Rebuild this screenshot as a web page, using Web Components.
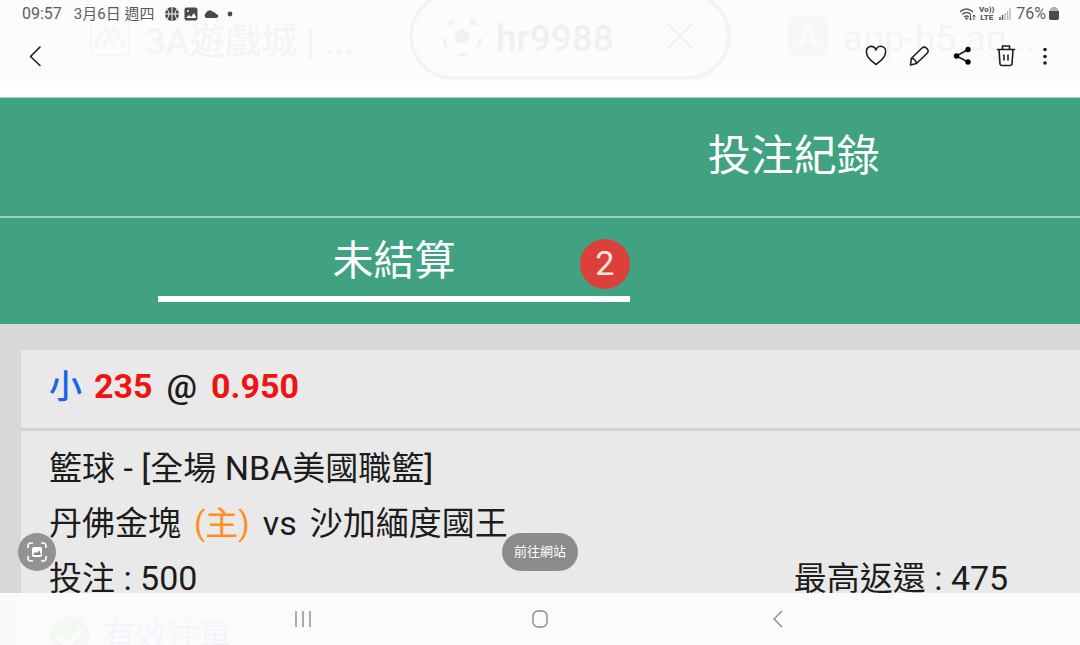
<!DOCTYPE html>
<html lang="zh-Hant">
<head>
<meta charset="utf-8">
<meta name="viewport" content="width=device-width, initial-scale=1">
<title>投注紀錄</title>
<style>
  html, body { margin: 0; height: 100%; }
  body { font-family: Roboto, "Noto Sans CJK TC", sans-serif; color: #1c1c1c; background: #fff; }
</style>
</head>
<body>
<photo-viewer>
  <bet-page slot="photo">
    <browser-tabs slot="browser"></browser-tabs>
    <span slot="title">投注紀錄</span>
    <bet-tab slot="tabs" count="2">未結算</bet-tab>
    <bet-card>
      <span slot="pick">小</span>
      <span slot="line">235</span>
      <span slot="odds">0.950</span>
      <bet-league slot="league"></bet-league>
      <bet-teams slot="teams"><span slot="home">丹佛金塊</span><span slot="away">沙加緬度國王</span></bet-teams>
      <bet-amount slot="stake" label="投注" value="500"></bet-amount>
      <bet-amount slot="return" label="最高返還" value="475"></bet-amount>
      <span slot="status">有效注單</span>
    </bet-card>
  </bet-page>
  <status-bar slot="top"></status-bar>
  <viewer-toolbar slot="top"></viewer-toolbar>
  <viewer-actions slot="bottom">前往網站</viewer-actions>
  <system-nav slot="bottom"></system-nav>
</photo-viewer>

<script>
const define = (name, html, setup) => {
  const template = document.createElement('template');
  template.innerHTML = html;
  customElements.define(name, class extends HTMLElement {
    constructor() {
      super();
      this.attachShadow({ mode: 'open' }).append(template.content.cloneNode(true));
    }
    connectedCallback() { if (setup) setup(this, this.shadowRoot); }
  });
};

define('photo-viewer', `
  <style>
    :host { display: block; position: relative; height: 100vh; overflow: hidden; }
    .chrome { position: absolute; inset: 0; display: flex; flex-direction: column; justify-content: space-between; }
    header { background: rgb(252 252 252 / 94%); padding-bottom: 2px; }
  </style>
  <slot name="photo"></slot>
  <div class="chrome">
    <header><slot name="top"></slot></header>
    <footer><slot name="bottom"></slot></footer>
  </div>`);

define('status-bar', `
  <style>
    :host { display: flex; align-items: center; justify-content: space-between; height: 28px; padding: 0 21px 0 22px; font-size: 16px; line-height: 28px; color: #5c5c5c; }
    .group { display: flex; align-items: center; gap: 5px; }
    .date { margin: 0 6px 0 7px; font-size: 15px; }
    svg { display: block; }
    .volte { font-size: 8px; line-height: 8px; font-weight: 700; text-align: center; }
    .volte b { display: block; }
    .right { gap: 3px; }
  </style>
  <div class="group">
    <span>09:57</span><span class="date">3月6日 週四</span>
    <svg width="14" height="14" viewBox="0 0 14 14"><circle cx="7" cy="7" r="7" fill="#4a4a4a"/><path d="M7 0v14M0 7h14M2 2q4 5 0 10M12 2q-4 5 0 10" fill="none" stroke="#fcfcfc"/></svg>
    <svg width="14" height="14" viewBox="0 0 14 14"><rect x="0.500" y="0.500" width="13" height="13" rx="2" fill="#4a4a4a"/><path d="M2 11l3-3 2 2 3-4 2 4v1z" fill="#fcfcfc"/><circle cx="4" cy="4" r="1" fill="#fcfcfc"/></svg>
    <svg width="16" height="14" viewBox="0 0 16 14"><path d="M3 11a3 3 0 0 1 0-5 4 4 0 0 1 7-1 3 3 0 0 1 3 2c3 0 3 4 0 4z" fill="#4a4a4a"/></svg>
    <svg width="14" height="14" viewBox="0 0 14 14"><circle cx="6" cy="7" r="2.400" fill="#4a4a4a"/></svg>
  </div>
  <div class="group right">
    <svg width="17" height="14" viewBox="0 0 17 14"><g fill="none" stroke="#5c5c5c" stroke-width="1.4"><path d="M1 5q6.500-6 13 0M3 7.500q4.500-4 9 0M5 10q2.500-2 5 0"/></g><circle cx="7.500" cy="11.500" r="1.200" fill="#5c5c5c"/><path d="M11.500 8v5M10 11.500l1.500 1.500 1.500-1.500M15 13V8M13.500 9.500L15 8l1.500 1.500" fill="none" stroke="#4a4a4a"/></svg>
    <div class="volte"><b>Vo))</b><b>LTE</b></div>
    <svg width="16" height="14" viewBox="0 0 16 14"><path d="M3 13v-3M5.500 13V8" stroke="#5c5c5c" stroke-width="1.500"/><path d="M8 13V6M10.500 13V4M13 13V1" stroke="#bcbcbc" stroke-width="1.500"/></svg>
    <span>76%</span>
    <svg width="10" height="14" viewBox="0 0 10 14"><path d="M3 0h4v1h1a1 1 0 0 1 1 1v3H1V2a1 1 0 0 1 1-1h1z" fill="#b4b4b4"/><path d="M0 4h10v7a2 2 0 0 1-2 2H2a2 2 0 0 1-2-2z" fill="#4a4a4a"/></svg>
  </div>`);

define('viewer-toolbar', `
  <style>
    :host { display: flex; align-items: center; height: 56px; padding: 0 18px 0 13px; }
    button { display: grid; place-items: center; width: 43px; height: 43px; padding: 0; border: 0; background: none; }
    .back { margin-right: auto; }
    .more { width: 36px; }
    svg { fill: none; stroke: #1e1e1e; stroke-width: 1.6; stroke-linecap: round; stroke-linejoin: round; }
  </style>
  <button class="back" aria-label="返回"><svg width="24" height="24" viewBox="0 0 24 24"><path d="M17 3l-9.500 9.500 9.500 9"/></svg></button>
  <button aria-label="最愛"><svg width="24" height="24" viewBox="0 0 24 24"><path d="M12 20.500C8 17.500 2.500 14 2.500 8.500A4.700 4.700 0 0 1 12 6a4.700 4.700 0 0 1 9.500 2.500C21.500 14 16 17.500 12 20.500z"/></svg></button>
  <button aria-label="編輯"><svg width="24" height="24" viewBox="0 0 24 24"><path d="M3.500 21l.8-6.500L15 4a3 3 0 0 1 4.300 0l.9.900a3 3 0 0 1 0 4.300L9.500 19.500zM4.300 14.500q4.200 0 5.200 5"/></svg></button>
  <button aria-label="分享"><svg width="24" height="24" viewBox="0 0 24 24"><path d="M18 5.500L6.500 12l11.500 6"/><g fill="#000" stroke="none"><circle cx="18" cy="5.500" r="2.700"/><circle cx="6.500" cy="12" r="2.700"/><circle cx="18" cy="18" r="2.700"/></g></svg></button>
  <button aria-label="刪除"><svg width="24" height="24" viewBox="0 0 24 24"><path d="M4.500 5.500h17M9.500 5V2h7v3M6 6l1 14a2 2 0 0 0 2 1.500h8a2 2 0 0 0 2-1.500l1-14M11 11v5M15 11v5"/></svg></button>
  <button class="more" aria-label="更多"><svg width="24" height="24" viewBox="0 0 24 24"><g fill="#1e1e1e" stroke="none"><circle cx="13" cy="5.500" r="1.800"/><circle cx="13" cy="12.500" r="1.800"/><circle cx="13" cy="19" r="1.800"/></g></svg></button>`);

define('browser-tabs', `
  <style>
    :host { display: flex; height: 97px; background: #fff; color: #333; font-size: 37px; font-weight: 500; white-space: nowrap; overflow: hidden; }
    .tab { display: flex; align-items: center; box-sizing: border-box; height: 88px; margin-top: -8px; gap: 15px; }
    .first { width: 409px; padding-left: 90px; color: #777; font-size: 36px; }
    .active { width: 322px; padding: 0 32px 0 28px; border: 4px solid #666; border-radius: 44px; gap: 13px; }
    .active svg:last-child { margin-left: auto; }
    .last { padding-left: 57px; color: #777; font-weight: 400; }
    svg { display: block; flex: none; }
    span { padding-top: 4px; }
  </style>
  <div class="tab first">
    <svg width="40" height="40" viewBox="0 0 40 40" fill="none" stroke="#7d9dac" stroke-width="3"><rect x="1" y="1" width="38" height="38" rx="4" stroke-width="2"/><path d="M5 31l10-19 10 19M13 31l11-19 11 19"/></svg>
    <span>3A遊戲城 | ...</span>
  </div>
  <div class="tab active">
    <svg width="42" height="42" viewBox="0 0 42 42" fill="#444"><path d="M21 13l8 6-3 9H16l-3-9z"/><path d="M5 9l7-6 2 4-5 4zM37 9l-7-6-2 4 5 4zM0 22l5 3 2 8-4-2zM42 22l-5 3-2 8 4-2zM15 41l6-4 6 4z"/></svg>
    <span>hr9988</span>
    <svg width="30" height="30" viewBox="0 0 30 30" stroke="#555" stroke-width="3"><path d="M2 2l26 26M28 2L2 28"/></svg>
  </div>
  <div class="tab last">
    <svg width="40" height="40" viewBox="0 0 40 40"><rect width="40" height="40" rx="6" fill="#aaa"/><path d="M11 31l9-21 9 21M14 24h12" fill="none" stroke="#fff" stroke-width="3"/></svg>
    <span>app-h5.ag...</span>
  </div>`);

define('bet-page', `
  <style>
    :host { display: block; width: 147%; min-height: 100%; background: #d8d8d8; }
    h1 { margin: 0; height: 118px; border-top: 1px solid #a8d8c8; border-bottom: 2px solid #9fcfbe; background: #40a280; color: #fff; font-size: 43px; line-height: 116px; font-weight: 400; text-align: center; }
    nav { display: flex; height: 106px; padding-right: 12px; background: #40a280; }
    main { padding: 26px 21px; }
  </style>
  <slot name="browser"></slot>
  <h1><slot name="title"></slot></h1>
  <nav><slot name="tabs"></slot></nav>
  <main><slot></slot></main>`);

define('bet-tab', `
  <style>
    :host { display: flex; justify-content: center; width: 50%; }
    button { position: relative; width: 472px; height: 84px; padding: 0; border: 0; border-bottom: 6px solid #fff; background: none; color: #fff; font: 41px/86px Roboto, "Noto Sans CJK TC", sans-serif; }
    .badge { position: absolute; right: 0; top: 21px; width: 50px; height: 50px; border-radius: 50%; background: #dd403a; color: #ffe6e0; font-size: 34px; line-height: 48px; }
  </style>
  <button><slot></slot><span class="badge"></span></button>`,
  (host, root) => { root.querySelector('.badge').textContent = host.getAttribute('count'); });

define('bet-card', `
  <style>
    :host { display: block; background: #e9e9e9; font-size: 33px; line-height: 55px; white-space: nowrap; }
    header { display: flex; gap: 14px; height: 78px; padding: 0 28px; border-bottom: 3px solid #d2d2d2; line-height: 73px; font-size: 34px; font-weight: 700; }
    .pick { color: #1766e6; font-size: 33px; font-weight: 500; margin-right: -2px; }
    .red { color: #ee1414; }
    .at { font-weight: 500; }
    .body { padding: 10px 0 10px 28px; }
    .sums { display: grid; grid-template-columns: 1fr 1fr; margin-left: -28px; }
    .sums > :first-child { padding-left: 28px; }
    .valid { display: flex; align-items: center; gap: 13px; height: 60px; color: #5a62e8; font-size: 32px; }
    svg { display: block; }
  </style>
  <header><span class="pick"><slot name="pick"></slot></span><span class="red"><slot name="line"></slot></span><span class="at">@</span><span class="red"><slot name="odds"></slot></span></header>
  <div class="body">
    <slot name="league"></slot>
    <slot name="teams"></slot>
    <div class="sums"><div><slot name="stake"></slot></div><div><slot name="return"></slot></div></div>
    <div class="valid"><svg width="41" height="41" viewBox="0 0 41 41"><circle cx="20.500" cy="20.500" r="20" fill="#58c040"/><path d="M10 21l8 8 14-15" fill="none" stroke="#fff" stroke-width="5"/></svg><slot name="status"></slot></div>
  </div>`);

define('bet-league', `
  <style>:host { display: block; } b { font-size: 34px; font-weight: 400; }</style>
  籃球<b> - [</b>全場<b> NBA</b>美國職籃<b>]</b>`);

define('bet-teams', `
  <style>:host { display: flex; gap: 13px; } .home { color: #ff9020; } .vs { font-size: 34px; }</style>
  <slot name="home"></slot><span class="home">(主)</span><span class="vs">vs</span><slot name="away"></slot>`);

define('bet-amount', `
  <style>:host { display: block; } b { font-size: 34px; font-weight: 400; }</style>
  <span></span><b></b>`,
  (host, root) => {
    root.querySelector('span').textContent = host.getAttribute('label');
    root.querySelector('b').textContent = ' : ' + host.getAttribute('value');
  });

define('viewer-actions', `
  <style>
    :host { display: grid; grid-template-columns: 1fr auto 1fr; padding: 0 18px 22px; }
    button { display: grid; place-items: center; height: 38px; padding: 0 12px; border: 0; border-radius: 19px; background: #8b8b8b; color: #fff; font: 13px/18px Roboto, "Noto Sans CJK TC", sans-serif; }
    .scan { width: 38px; padding: 0; background: #929292; }
  </style>
  <button class="scan" aria-label="擷取圖片"><svg width="20" height="20" viewBox="0 0 20 20"><path d="M1 6V4a3 3 0 0 1 3-3h2M14 1h2a3 3 0 0 1 3 3v2M19 14v2a3 3 0 0 1-3 3h-2M6 19H4a3 3 0 0 1-3-3v-2" fill="none" stroke="#fff" stroke-width="1.600"/><rect x="5" y="5" width="10" height="10" rx="2" fill="#fff"/><path d="M6 13l2-3 2 1 2-3 2 5z" fill="#858585"/></svg></button>
  <button><slot></slot></button>`);

define('system-nav', `
  <style>
    :host { display: flex; justify-content: center; height: 52px; background: rgb(252 252 252 / 95%); }
    button { display: grid; place-items: center; width: 22%; padding: 0; border: 0; background: none; }
    svg { fill: none; stroke: #8a8a8a; stroke-width: 1.4; }
  </style>
  <button aria-label="最近"><svg width="20" height="20" viewBox="0 0 20 20"><path d="M4 2v16M11 2v16M18 2v16"/></svg></button>
  <button aria-label="首頁"><svg width="20" height="20" viewBox="0 0 20 20"><rect x="3" y="2" width="14" height="16" rx="5"/></svg></button>
  <button aria-label="上一頁"><svg width="20" height="20" viewBox="0 0 20 20"><path d="M14 2l-8 8 8 8"/></svg></button>`);
</script>
</body>
</html>
